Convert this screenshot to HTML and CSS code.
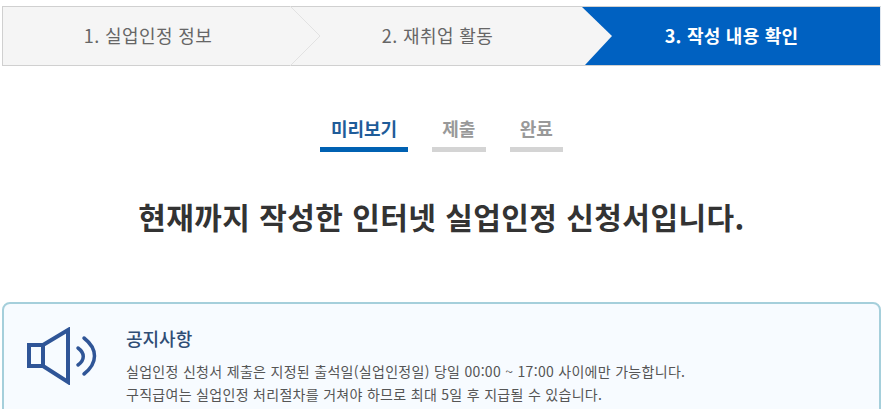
FILE: index.html
```html
<!DOCTYPE html>
<html lang="ko">
<head>
<meta charset="utf-8">
<title>인터넷 실업인정 신청서</title>
<link rel="stylesheet" href="styles.css">
</head>
<body>
<div class="page">
  <ol class="stepper">
    <li class="step">1. 실업인정 정보
      <svg class="chevron" width="32" height="60" viewBox="0 0 32 60"><path d="M0 0 L30 30 L0 60" fill="#f5f5f5" stroke="#e2e2e2" stroke-width="1"/></svg>
    </li>
    <li class="step">2. 재취업 활동</li>
    <li class="step step-active">
      <svg class="chevron chevron-current" width="32" height="58" viewBox="0 0 32 58"><path d="M0 0 L30 29 L3 58 L0 58 Z" fill="#f5f5f5"/></svg>
      3. 작성 내용 확인
    </li>
  </ol>

  <ul class="tabs">
    <li class="tab tab-on">미리보기</li>
    <li class="tab">제출</li>
    <li class="tab">완료</li>
  </ul>

  <h1 class="headline">현재까지 작성한 인터넷 실업인정 신청서입니다.</h1>

  <section class="notice">
    <svg class="notice-icon" width="72" height="58" viewBox="0 0 72 58" fill="none" stroke="#2f5597">
      <path d="M3 18 H17 V39 H3 Z M17 18 L42 3 V55 L17 39" stroke-width="4" stroke-linejoin="miter"/>
      <path d="M52 21 C59 26 59 33 52 38" stroke-width="3.5" stroke-linecap="round"/>
      <path d="M58 11 C72 22 72 36 58 47" stroke-width="3.5" stroke-linecap="round"/>
    </svg>
    <div class="notice-body">
      <h2 class="notice-title">공지사항</h2>
      <p class="notice-text">실업인정 신청서 제출은 지정된 출석일(실업인정일) 당일 00:00 ~ 17:00 사이에만 가능합니다.</p>
      <p class="notice-text">구직급여는 실업인정 처리절차를 거쳐야 하므로 최대 5일 후 지급될 수 있습니다.</p>
    </div>
  </section>
</div>
</body>
</html>
```

FILE: styles.css
```css
* { box-sizing: border-box; }
html, body { margin: 0; padding: 0; background: #fff; overflow: hidden; }
body { font-family: "Noto Sans CJK KR", "Noto Sans", sans-serif; color: #222; }
.page { width: 894px; height: 409px; padding: 6px 13px 0 2px; overflow: hidden; }
ol, ul { list-style: none; margin: 0; padding: 0; }

.stepper {
  display: grid;
  grid-template-columns: 287px 292px 298px;
  height: 60px;
  border: 1px solid #d0d0d0;
  border-right-color: #dfe6ee;
  background: #f5f5f5;
}
.step {
  position: relative;
  display: flex;
  align-items: center;
  justify-content: center;
  padding: 0 0 2px 3px;
  font-size: 18px;
  font-weight: 400;
  letter-spacing: 0.4px;
  color: #666;
}
.chevron { position: absolute; top: -1px; left: 100%; z-index: 1; }
.step-active { background: #0061c1; color: #fff; font-weight: 700; letter-spacing: 0.25px; padding-left: 1px; }
.chevron-current { top: 0; left: 0; }

.tabs {
  display: flex;
  justify-content: center;
  gap: 24px;
  margin-top: 47px;
}
.tab {
  height: 39px;
  min-width: 53.5px;
  padding: 3px 0 0;
  text-align: center;
  font-size: 18px;
  font-weight: 700;
  line-height: 24px;
  color: #999;
  border-bottom: 5px solid #d4d4d4;
}
.tab-on { min-width: 88px; color: #1f5c99; border-bottom-color: #0061b2; }

.headline {
  margin: 44px 0 0;
  text-align: center;
  font-size: 30px;
  font-weight: 700;
  letter-spacing: 0.45px;
  line-height: 40px;
  color: #333;
}

.notice {
  display: flex;
  margin-top: 66px;
  height: 140px;
  padding: 22px 20px 0 22px;
  background: #f7fbff;
  border: 2px solid #a5cfdb;
  border-radius: 8px;
}
.notice-icon { flex: none; margin-top: 1px; }
.notice-body { margin-left: 28px; }
.notice-title {
  margin: 0 0 10px;
  font-size: 18px;
  font-weight: 500;
  line-height: 24px;
  color: #2f4d75;
}
.notice-text {
  margin: 0;
  font-size: 14px;
  letter-spacing: 0.3px;
  line-height: 23px;
  color: #555;
}
```
